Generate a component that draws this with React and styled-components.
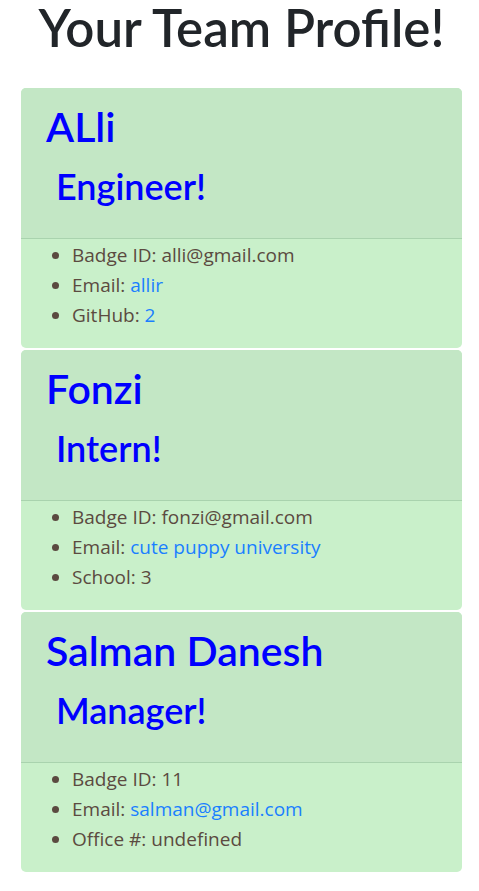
import styled, { createGlobalStyle } from 'styled-components';

const GlobalStyle = createGlobalStyle`
  html, body {
    margin: 0;
    padding: 0;
    background: #fff;
  }
  body {
    font-family: 'Lato', 'Noto Sans', sans-serif;
    color: #212529;
  }
`;

const Page = styled.div`
  display: flex;
  flex-direction: column;
  align-items: center;
  padding: 0 17px 20px 21px;
`;

const Title = styled.h1`
  margin: 0 0 32px;
  font-size: 51px;
  font-weight: 600;
  line-height: 56px;
  color: #212529;
  text-align: center;
  white-space: nowrap;
`;

const CardList = styled.div`
  display: flex;
  flex-direction: column;
  gap: 2px;
  width: 100%;
`;

const Card = styled.section`
  display: flex;
  flex-direction: column;
  border-radius: 5px;
  overflow: hidden;
  background: #c9f0ca;
`;

const CardHeader = styled.div`
  display: flex;
  flex-direction: column;
  padding: 13px 25px 30px;
  background: #c3e7c5;
  border-bottom: 1px solid #a9d3ae;
`;

const Name = styled.h2`
  margin: 0 0 11px;
  font-size: 41px;
  font-weight: 600;
  line-height: 52px;
  color: #0000ff;
`;

const Role = styled.h3`
  margin: 0;
  padding-left: 10px;
  font-size: 36px;
  font-weight: 600;
  line-height: 44px;
  color: #0000ff;
`;

const Details = styled.ul`
  margin: 0;
  padding: 1px 0 18px 51px;
  list-style: disc;
  color: #5b4a40;
  font-family: 'Open Sans', 'Noto Sans', sans-serif;
  font-size: 19px;
  line-height: 30px;
  li::marker {
    color: #5b4a40;
  }
`;

const Link = styled.a`
  color: #1a7fff;
  text-decoration: none;
`;

const members = [
  {
    name: 'ALli',
    role: 'Engineer',
    id: 'alli@gmail.com',
    email: 'allir',
    extraLabel: 'GitHub',
    extra: '2',
    extraLink: true,
  },
  {
    name: 'Fonzi',
    role: 'Intern',
    id: 'fonzi@gmail.com',
    email: 'cute puppy university',
    extraLabel: 'School',
    extra: '3',
  },
  {
    name: 'Salman Danesh',
    role: 'Manager',
    id: '11',
    email: 'salman@gmail.com',
    extraLabel: 'Office #',
    extra: 'undefined',
  },
];

const App = () => {
  return (
    <>
      <GlobalStyle />
      <Page>
        <Title>Your Team Profile!</Title>
        <CardList>
          {members.map((m) => (
            <Card key={m.name}>
              <CardHeader>
                <Name>{m.name}</Name>
                <Role>{m.role}!</Role>
              </CardHeader>
              <Details>
                <li>Badge ID: {m.id}</li>
                <li>
                  Email: <Link href='#'>{m.email}</Link>
                </li>
                <li>
                  {m.extraLabel}:{' '}
                  {m.extraLink ? <Link href='#'>{m.extra}</Link> : m.extra}
                </li>
              </Details>
            </Card>
          ))}
        </CardList>
      </Page>
    </>
  );
};

export default App;
